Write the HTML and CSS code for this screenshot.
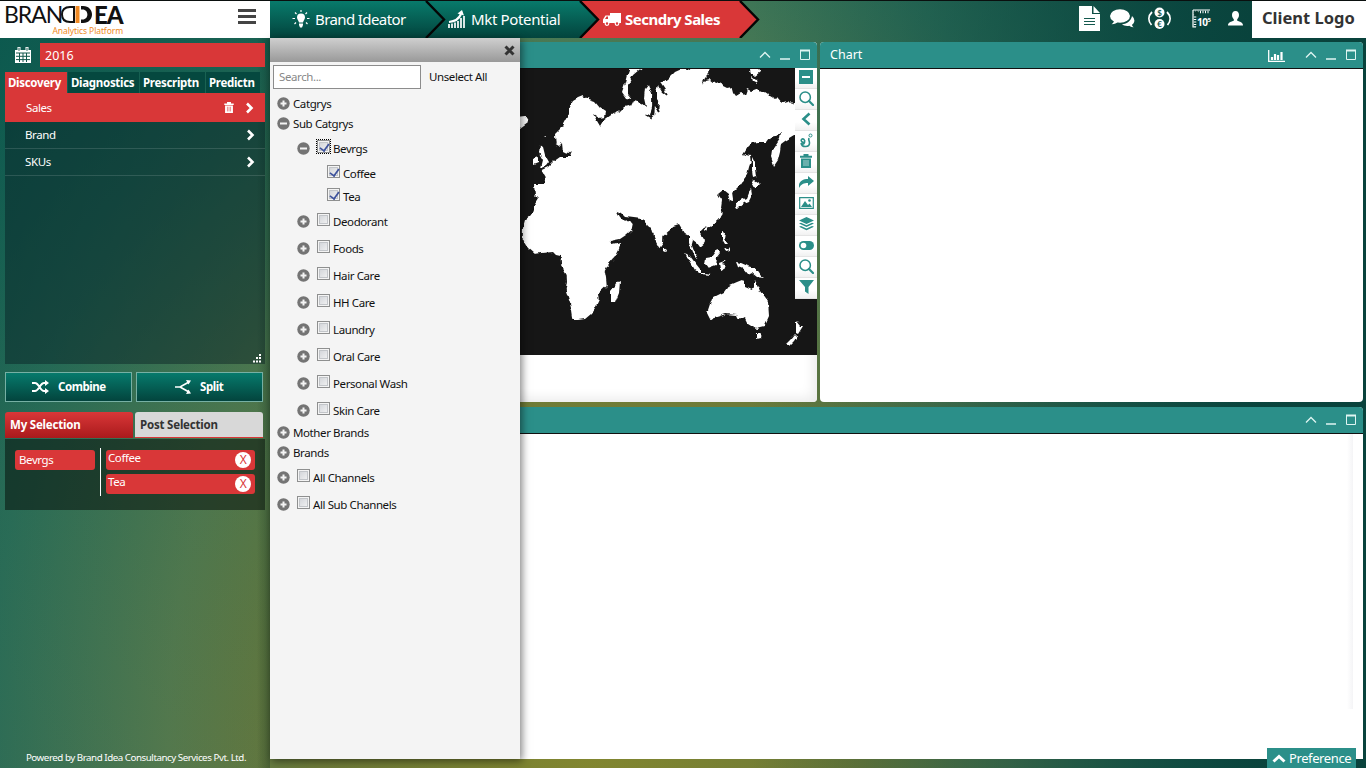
FILE: index.html
```html
<!DOCTYPE html>
<html lang="en">
<head>
<meta charset="utf-8">
<title>Brandidea Analytics Platform</title>
<link rel="stylesheet" href="styles.css">
</head>
<body>
<svg class="defs" width="0" height="0">
  <symbol id="plus" viewBox="0 0 13 13"><circle cx="6.500" cy="6.500" r="6.200" fill="#747474"/><path d="M3.500 6.500h6M6.500 3.500v6" stroke="#f4f4f4" stroke-width="2"/></symbol>
  <symbol id="minus" viewBox="0 0 13 13"><circle cx="6.500" cy="6.500" r="6.200" fill="#747474"/><path d="M3 6.500h7" stroke="#f4f4f4" stroke-width="2"/></symbol>
  <symbol id="chev" viewBox="0 0 8 12"><path d="M1.500 1.500L6 6l-4.500 4.500" fill="none" stroke="#fff" stroke-width="2.600"/></symbol>
  <symbol id="trash" viewBox="0 0 12 14"><path fill="currentColor" d="M0 1.800h3.500V0h5v1.800H12v2H0zM1 4.500h10V14H1z"/><path d="M4 6v6M6 6v6M8 6v6" stroke="#fff" stroke-opacity=".6"/></symbol>
  <symbol id="trash-red" viewBox="0 0 12 14"><path fill="#fff" d="M0 1.800h3.500V0h5v1.800H12v2H0zM1 4.500h10V14H1z"/><path d="M4 6v6M6 6v6M8 6v6" stroke="#d93738" stroke-opacity=".7"/></symbol>
  <symbol id="lens" viewBox="0 0 15 15"><circle cx="6.200" cy="6.200" r="5.200" fill="none" stroke="currentColor" stroke-width="1.500"/><path d="M10 10l4 4" stroke="currentColor" stroke-width="2.200" stroke-linecap="round"/></symbol>
  <symbol id="winctl" viewBox="0 0 52 12"><path d="M1 8.500l5-5 5 5M21 10h10" fill="none" stroke="#dff5f2" stroke-width="1.300"/><path d="M41.500 1.500h9v9h-9z" fill="none" stroke="#dff5f2"/><path d="M41 1.500h10" stroke="#dff5f2" stroke-width="2"/></symbol>
</svg>
<div class="app">
  <header class="top">
    <div class="brand">
      <div class="logo">
        <div class="word"><span class="thin">BRAN</span><svg width="32" height="17" viewBox="0 0 32 17"><path d="M13 1H9C3 1 1 4.500 1 8.500S3 16 9 16h4z" fill="none" stroke="#111" stroke-width="2"/><path d="M14.500 0h4v17h-4z" fill="#f08a24"/><path d="M20 0h2c12 0 12 17 0 17h-2v-3.500h1.500c6.500 0 6.500-10 0-10H20z" fill="#111"/></svg><span class="fat">EA</span></div>
        <div class="tag">Analytics Platform</div>
      </div>
      <span class="burger"></span>
    </div>
    <nav class="crumbs">
      <svg class="arrows" width="500" height="37" viewBox="0 0 500 37">
        <defs><linearGradient id="gt" x2="0" y2="1"><stop stop-color="#087a6b"/><stop offset="1" stop-color="#03443d"/></linearGradient></defs>
        <path d="M300 0h170l18 18.500-18 18.500H300z" fill="#d93738"/>
        <path d="M150 0h160l18 18.500-18 18.500H150z" fill="url(#gt)"/>
        <path d="M0 0h156l18 18.500-18 18.500H0z" fill="url(#gt)"/>
        <path d="M156 0l18 18.500-18 18.500M310 0l18 18.500-18 18.500M470 0l18 18.500-18 18.500" fill="none" stroke="#050505" stroke-width="2.400"/>
      </svg>
      <div class="crumb c1"><svg width="18" height="18" viewBox="0 0 18 18"><path d="M9 3.500a4 4 0 0 1 4 4c0 2-1.700 3-2 5H7c-.3-2-2-3-2-5a4 4 0 0 1 4-4zM7 13.500h4V15l-1 2.500H8L7 15z" fill="#fff"/><path d="M9 0v2M3 2.500l1.500 1.500M15 2.500L13.500 4M.5 8.500h2.500M15 8.500h2.500M2.500 14L4 12.500M15.500 14L14 12.500" stroke="#fff" stroke-width="1.200"/></svg><span>Brand Ideator</span></div>
      <div class="crumb c2"><svg width="17" height="19" viewBox="0 0 17 19"><path d="M1 18v-4M4 18v-4.500M7 18v-5.500M10 18v-7M13 18V8M16 18V6" stroke="#fff" stroke-width="1.700"/><path d="M1 12c6-.5 10-3 12-8" fill="none" stroke="#fff" stroke-width="2.200"/><path d="M9.500 3.500L14 0l2 5.500z" fill="#fff"/></svg><span>Mkt Potential</span></div>
      <div class="crumb c3"><svg width="18" height="13" viewBox="0 0 18 13"><path d="M7 0h11v10H0V6.500L2.500 2.500H7z" fill="#fff"/><path d="M2 6l1.500-2.500H5V6z" fill="#d93738"/><circle cx="4" cy="10.500" r="1.800" fill="#d93738" stroke="#fff" stroke-width="1.200"/><circle cx="14" cy="10.500" r="1.800" fill="#d93738" stroke="#fff" stroke-width="1.200"/></svg><span class="bold">Secndry Sales</span></div>
    </nav>
    <div class="tools">
      <svg width="21" height="25" viewBox="0 0 21 25"><path d="M0 0h13v8h8v17H0z" fill="#fff"/><path d="M14.500 0l6.500 7h-6.500z" fill="#fff"/><path d="M5 12.500h11M5 15.500h11M5 18.500h11" stroke="#14594e" stroke-width="1.200"/></svg>
      <svg class="chat" width="25" height="19" viewBox="0 0 25 19"><path d="M22 7a9 7 0 0 1 2.400 4.500c0 2-1 3.200-2.400 4.200.2 1.200.8 1.900 1.600 2.500-2 .1-3.300-.5-4.300-1.400-3 .6-5.700-.2-7.300-1.500C17.500 15 21 11.500 22 7z" fill="#fff"/><ellipse cx="10" cy="7" rx="10" ry="6.800" fill="#fff"/><path d="M4 10c0 3-.5 4-2.500 5.300 3.500 0 5-1 6.500-2.500z" fill="#fff"/></svg>
      <svg width="23" height="23" viewBox="0 0 23 23"><circle cx="11.500" cy="5.500" r="5" fill="#fff"/><circle cx="11.500" cy="17" r="5" fill="#fff"/><path d="M4 5C0 9 0 14 3.500 18M19 5c4 4 4 9 .5 13" fill="none" stroke="#fff" stroke-width="1.800"/><text x="11.500" y="8.700" class="cur">$</text><text x="11.500" y="20.200" class="cur">€</text></svg>
      <svg class="ruler" width="20" height="20" viewBox="0 0 20 20"><path d="M1 1h17M1 1v17h3" fill="none" stroke="#fff" stroke-width="1.200"/><path d="M3 3h15" stroke="#fff" stroke-width="2.500" stroke-dasharray="1 1.500"/><path d="M3 5v13" stroke="#fff" stroke-width="2.500" stroke-dasharray="1 1.500"/><circle cx="4.500" cy="4.500" r="2.600" fill="#09382f"/><text x="5" y="16.500" class="ten">10</text><text x="15.500" y="12.500" class="five">5</text></svg>
      <svg width="15" height="15" viewBox="0 0 15 15"><path d="M7.500 0c2.500 0 3.500 1.700 3.500 4 0 2-1 3.500-1.800 4.300v1.500c2.500 1 5.800 1.200 5.800 4.700H0c0-3.500 3.300-3.700 5.800-4.700V8.300C5 7.500 4 6 4 4c0-2.300 1-4 3.500-4z" fill="#fff"/></svg>
    </div>
    <div class="client"><span>Client Logo</span></div>
  </header>
  <div class="body">
    <aside class="side">
      <div class="year"><svg width="16" height="16" viewBox="0 0 16 16"><path d="M0 3h16v13H0z" fill="#fff"/><path d="M4 0v4M12 0v4" stroke="#fff" stroke-width="3"/><path d="M4 .8v3M12 .8v3" stroke="#14594e"/><path d="M1 6h14M1 9.300h14M1 12.600h14M4.500 6v9M8 6v9M11.500 6v9" stroke="#14594e"/></svg><div class="yearbox"><span>2016</span></div></div>
      <div class="tabs"><div class="tab on"><span>Discovery</span></div><div class="tab t2"><span>Diagnostics</span></div><div class="tab t3"><span>Prescriptn</span></div><div class="tab t4"><span>Predictn</span></div></div>
      <div class="list">
        <div class="item sel"><span>Sales</span><svg width="10" height="11" class="tr"><use href="#trash-red"/></svg><svg width="9" height="12"><use href="#chev"/></svg></div>
        <div class="item"><span>Brand</span><svg width="9" height="12"><use href="#chev"/></svg></div>
        <div class="item"><span>SKUs</span><svg width="9" height="12"><use href="#chev"/></svg></div>
        <svg class="grip" width="9" height="9" viewBox="0 0 9 9"><path d="M6 1h2M3 4h2M6 4h2M0 7.500h2M3 7.500h2M6 7.500h2" stroke="#fff" stroke-width="1.800"/></svg>
      </div>
      <div class="btns">
        <div class="btn"><svg width="17" height="14" viewBox="0 0 17 14"><path d="M0 3h3c4 0 5 8 9 8h2M0 11h3c4 0 5-8 9-8h2" fill="none" stroke="#fff" stroke-width="2"/><path d="M13 0l4 3-4 3zM13 8l4 3-4 3z" fill="#fff"/></svg><span>Combine</span></div>
        <div class="btn split"><svg width="16" height="14" viewBox="0 0 16 14"><path d="M0 7h5l9-5M5 7l9 5" fill="none" stroke="#fff" stroke-width="1.700"/><path d="M11 0l5 .5-2.500 4zM11 14l5-.5-2.500-4z" fill="#fff"/></svg><span>Split</span></div>
      </div>
      <div class="seltabs"><div class="st my"><span>My Selection</span></div><div class="st post"><span>Post Selection</span></div></div>
      <div class="selbox">
        <div class="chip key"><span>Bevrgs</span></div>
        <div class="chips"><div class="chip"><span>Coffee</span><b>X</b></div><div class="chip"><span>Tea</span><b>X</b></div></div>
      </div>
      <div class="powered"><span>Powered by Brand Idea Consultancy Services Pvt. Ltd.</span></div>
    </aside>
    <main class="main">
      <div class="row1">
        <section class="card mapcard">
          <div class="bar"><svg width="52" height="12"><use href="#winctl"/></svg></div>
          <div class="map">
            <svg class="world" width="544" height="286" viewBox="273 69 544 286"><defs><filter id="coast" x="0" y="0" width="1" height="1" filterUnits="objectBoundingBox"><feTurbulence type="fractalNoise" baseFrequency=".2" numOctaves="1" seed="4"/><feDisplacementMap in="SourceGraphic" scale="5" xChannelSelector="R" yChannelSelector="G"/></filter></defs>
            <g filter="url(#coast)"><path fill="#191919" d="M273 60h560v300H273z"/>
            <path fill="#fff" d="M523 227L522.700 240 527 247 535 254 541 253 553 252 556 255 560.700 256 561 265 566.700 275 567 281 565.700 290 570 303 572 311 573.300 320 578 320 585 319 591 314 595 308 598.700 300 598 294 606.700 286 606 278 604.700 271 608 265 615 257 619 249 621.300 242 612 244 610 241 620 239 626 235 631.700 230 632.700 225 628.300 220 624 221 620 217 616.700 210.700 621 213 625 217 630 217.500 643.300 219.300 648 226 651.700 226.700 655 240 659.300 248.300 663 243 663.300 236 670 230 673 226 679 224 682 229 685 234 689 235.700 689 243 692 251 696.700 259 698 257 694 251 691.700 245 693 240 697 243 700 247 704.700 243 705 240 702 235 699 231.700 703 227.700 710 227 718 220 722.700 213 721 207 722 200 718 194 723 190 728 194 730 202 733 200 732 193 740 185 744 179 747 175 749 167 750.700 162 750 155 746 154 742.300 156 748 147 752 143 758 142 767 142 770 138 775 137 781 132 780 138 772 150 771 157 774 166 778 160 780 152 781 144 785 141 790 138 800 132 800 101 792 105 788 101 782 102.700 777 97 775 99 770 96 768 93 765 91 760 92 757 88.700 751 91 747 89 745 94.700 741 93 736 96 733 92 731.700 87 727 88 723 86 720 82 715 83 710 79 706 80 702 84.700 705 78 709 74 710 64H691L690 70 684 68 675 72 668 79 661 84 665 90 667 95 662 92 658 85 656 92 656 98 659 103 658 112 655 106 654 117 650 115 653 106 653 96 650 90 648 84 645 88 644 98 646 107 641 103 634 101 632 105 624 107 619 112 613 113.700 607 118 603 121 600 126 597 121 593 114 599 118 605 117 606 111 600 107 595 101 589 99 583 96 578 98 573 101 569 108 567 117 561 128 555 134 555.700 144 559 146 562 143 563 152 567 154 571.700 150 570 157 560 157 553 162 548 167 541.700 170 545.700 177 544 184 534 184 535 195 539 199 533 209 531 215 525 220z"/>
            <path fill="#fff" d="M647 64L639 70 633 75 628 85 628 94 632 99 626 98 622 92 625 83 627 75 631 64zM540 145l3 2 2 8 4 7-3 4-5 2 2-8-4-7zM533 158l5-2v7l-5 2zM516 118l9-1 3 5-8 6zM544 138l3-2v2zM749 64h10l1 8-5 4-4-2zM752 77l4 3 1 4-4-2zM752 157l3 6 0 6 1 8-3 1-1-9zM754 180l6 4-4 4-4-2zM751 189l1 6-3 6-5 2-6 5-3-1 4-6 7-3 2-5zM722 232l3 1-1 6 4 5-3 0-3-5zM724 247l4 3 2-3 0 4-4 1zM706 258l6-1 6-8 2 4-3 4-1 8-8 3-3-4zM685 253l5 3 6 8 4 5v4l-5-3zM700 272l11 2v1l-11-1zM719 263l8-3-5 4 3 1-2 5-3-1zM736 262l5 1 7 3 8 2 5 7 4 3-8-1-5-4-4 2-5-6-5-2zM712 298l12-6 5-7 7-3 5-2 4 1 0 6 7 3 3-10 5 11 8 11 1 14-5 11-8 2-8-5-4-8-6 3-2-4-10-1-16 5-3-6zM757 333h5l-1 5-4 1zM796 321l4 5 3 0-5 8-2-1zM795 334l2 2-3 5-5 5-3-2 5-5zM618 282l2-1-1 12-4 10-4 0 0-12zM663 247l3 2-1 3-2-1zM704 229l3-2 1 3-3 2zM620 110l-4 4-3-1z"/>
            <path fill="none" stroke="#191919" stroke-width="1.800" d="M553 148l9 3M653 83v24l-2 10-5-3M659 86l8 9M655 105l4 7M720 196l4 2M774 141l-3 8"/></g></svg>
            <div class="mtools">
              <i><svg width="14" height="14"><path d="M0 0h14v14H0z" fill="#2b8f89"/><path d="M3 7h8" stroke="#fff" stroke-width="2"/></svg></i>
              <i><svg width="15" height="15"><use href="#lens"/></svg></i>
              <i><svg width="10" height="14"><path d="M8.500 1.500L2.500 7l6 5.500" fill="none" stroke="#2b8f89" stroke-width="2.600"/></svg></i>
              <i><svg width="14" height="15" viewBox="0 0 14 15"><path d="M5.500 9.500C3 9.500 1.500 8 2.500 6.500 4 5 6.500 6.500 5.500 9.500c-.5 2-2.500 2-3.500 1M2 10c1 5 8.500 4.500 8.500 0 0-2.500-1.500-3-.5-5" fill="none" stroke="#2b8f89" stroke-width="1.600"/><circle cx="11.500" cy="2.500" r="1.500" fill="none" stroke="#2b8f89"/></svg></i>
              <i><svg width="12" height="14"><use href="#trash"/></svg></i>
              <i><svg width="15" height="13"><path d="M0 12C-1 6 3 3 9 3V0l6 5-6 5V7C5 7 2 8 0 12z" fill="#2b8f89"/></svg></i>
              <i><svg width="15" height="12"><path d="M.7.700h13.600v10.600H.7z" fill="#fff" stroke="#2b8f89" stroke-width="1.200"/><path d="M2 10l4-6 3 4 1.500-1.500L13 10z" fill="#2b8f89"/><circle cx="10.500" cy="3.500" r="1.300" fill="#2b8f89"/></svg></i>
              <i><svg width="15" height="14"><path d="M7.500 0L15 3.500 7.500 7 0 3.500zM0 6.500l2-.8 5.500 2.600L13 5.700l2 .8L7.500 10zM0 9.700l2-.8 5.500 2.600L13 8.900l2 .8-7.500 3.600z" fill="#2b8f89"/></svg></i>
              <i><svg width="15" height="9"><rect width="15" height="9" rx="4.500" fill="#2b8f89"/><circle cx="4.500" cy="4.500" r="2.800" fill="#fff"/></svg></i>
              <i><svg width="15" height="15"><use href="#lens"/></svg></i>
              <i><svg width="15" height="14"><path d="M0 0h15L9.500 7v7L6 11.500V7z" fill="#2b8f89"/></svg></i>
            </div>
          </div>
        </section>
        <section class="card chart">
          <div class="bar"><span class="title">Chart</span><svg class="bars" width="17" height="12" viewBox="0 0 17 12"><path d="M.7 0v11.300H17" fill="none" stroke="#fff" stroke-width="1.300"/><path d="M4 10V7M7 10V4M10 10V5M13.500 10V2" stroke="#fff" stroke-width="2.200"/></svg><svg width="52" height="12"><use href="#winctl"/></svg></div>
        </section>
      </div>
      <section class="card grid">
        <div class="bar"><svg width="52" height="12"><use href="#winctl"/></svg></div>
        <div class="scroll"></div>
      </section>
    </main>
  </div>
  <div class="panel">
    <div class="phead"><svg width="11" height="11" viewBox="0 0 11 11"><path d="M1.500 1.500l8 8M9.500 1.500l-8 8" stroke="#333" stroke-width="3"/></svg></div>
    <div class="search"><div class="input"><span>Search...</span></div><span class="unsel">Unselect All</span></div>
    <div class="tree">
      <div class="n r20"><svg width="13" height="13"><use href="#plus"/></svg><span>Catgrys</span></div>
      <div class="n r20"><svg width="13" height="13"><use href="#minus"/></svg><span>Sub Catgrys</span></div>
      <div class="n r30 l1"><svg width="13" height="13"><use href="#minus"/></svg><em class="on foc"></em><span>Bevrgs</span></div>
      <div class="n l2 r20b"><em class="on"></em><span>Coffee</span></div>
      <div class="n l2 r25"><em class="on"></em><span>Tea</span></div>
      <div class="n l1"><svg width="13" height="13"><use href="#plus"/></svg><em></em><span>Deodorant</span></div>
      <div class="n l1"><svg width="13" height="13"><use href="#plus"/></svg><em></em><span>Foods</span></div>
      <div class="n l1"><svg width="13" height="13"><use href="#plus"/></svg><em></em><span>Hair Care</span></div>
      <div class="n l1"><svg width="13" height="13"><use href="#plus"/></svg><em></em><span>HH Care</span></div>
      <div class="n l1"><svg width="13" height="13"><use href="#plus"/></svg><em></em><span>Laundry</span></div>
      <div class="n l1"><svg width="13" height="13"><use href="#plus"/></svg><em></em><span>Oral Care</span></div>
      <div class="n l1"><svg width="13" height="13"><use href="#plus"/></svg><em></em><span>Personal Wash</span></div>
      <div class="n l1"><svg width="13" height="13"><use href="#plus"/></svg><em></em><span>Skin Care</span></div>
      <div class="n r18"><svg width="13" height="13"><use href="#plus"/></svg><span>Mother Brands</span></div>
      <div class="n r20"><svg width="13" height="13"><use href="#plus"/></svg><span>Brands</span></div>
      <div class="n l0"><svg width="13" height="13"><use href="#plus"/></svg><em></em><span>All Channels</span></div>
      <div class="n"><svg width="13" height="13"><use href="#plus"/></svg><em></em><span>All Sub Channels</span></div>
    </div>
  </div>
  <div class="pref"><svg width="14" height="9" viewBox="0 0 14 9"><path d="M1.500 7.500L7 2.500l5.500 5" fill="none" stroke="#fff" stroke-width="3"/></svg><span>Preference</span></div>
</div>
</body>
</html>
```
FILE: styles.css
```css
* { box-sizing: border-box; }
body { margin: 0; font: 11.5px/16px "Noto Sans", "Open Sans", sans-serif; letter-spacing: -.4px; color: #111; }
svg { display: block; flex: none; }
span { white-space: nowrap; }
.defs { position: absolute; }
.app { position: relative; width: 1366px; height: 768px; overflow: hidden; display: flex; flex-direction: column; border-top: 1px solid #0a0f0e; background: linear-gradient(90deg, rgba(8,64,58,0) 55%, rgba(8,64,58,.9) 92%), radial-gradient(ellipse 680px 1000px at 590px 740px, #82862f 0%, #6d7a38 40%, #577d50 62%, #2d705a 88%, #125b50 115%); }
.top { display: flex; height: 37px; flex: none; }
.brand { width: 270px; background: #fff; display: flex; justify-content: space-between; padding: 4px 14px 0 4px; }
.logo { width: 119px; }
.word { display: flex; align-items: center; height: 19px; color: #111; }
.word svg { margin: 0 1px 0 0; }
.thin { font: 23px/19px Lato, sans-serif; letter-spacing: -1px; width: 57px; }
.fat { font: 900 24px/19px Lato, sans-serif; letter-spacing: -1px; }
.tag { color: #f08a24; font-size: 8.5px; line-height: 12px; text-align: right; letter-spacing: -.1px; margin-top: 1px; }
.burger { width: 18px; height: 15px; margin-top: 4px; border-top: 3px solid #444; border-bottom: 3px solid #444; background: linear-gradient(#444, #444) 0 3px / 18px 3px no-repeat; }
.crumbs { width: 500px; position: relative; }
.arrows { position: absolute; left: 0; top: 0; }
.crumb { position: absolute; top: 0; height: 37px; display: flex; align-items: center; gap: 5px; padding-bottom: 1px; color: #fff; font-size: 15px; letter-spacing: -.35px; }
.c1 { left: 22px; letter-spacing: -.6px; } .c2 { left: 178px; gap: 6px; } .c3 { left: 333px; gap: 4px; }
.bold { font-weight: 700; letter-spacing: -.5px; }
.tools { flex: 1; display: flex; justify-content: flex-end; align-items: center; gap: 10px; padding: 0 9px 2px 0; }
.tools .chat { margin-right: 3px; }
.tools .ruler { margin: 0 6px 0 11px; }
.cur { font: 700 8px Lato, sans-serif; text-anchor: middle; fill: #14594e; letter-spacing: 0; }
.ten { font: 700 10px "Open Sans", sans-serif; fill: #fff; }
.five { font: 700 6px "Open Sans", sans-serif; fill: #fff; }
.client { width: 114px; background: #fff; color: #333; font-size: 16.5px; font-weight: 700; letter-spacing: 0; display: flex; align-items: center; padding: 0 0 3px 10px; }
.body { display: flex; flex: 1; min-height: 0; }
.side { width: 270px; padding: 5px 5px 2px; display: flex; flex-direction: column; color: #fff; background: linear-gradient(90deg, rgba(0,0,0,0) 95%, rgba(0,30,20,.25)), linear-gradient(160deg, rgba(10,88,78,.75), rgba(20,88,70,.2) 50%, rgba(60,80,50,.1)); }
.year { display: flex; align-items: center; padding-left: 10px; gap: 9px; height: 24px; }
.yearbox { flex: 1; height: 24px; background: #d93738; padding: 5px 5px; font-size: 12.5px; letter-spacing: 0; }
.tabs { display: flex; margin-top: 5px; height: 21px; gap: 1px; font-weight: 700; font-size: 11.5px; letter-spacing: -.3px; }
.tab { background: #05483f; line-height: 22px; padding-left: 3px; }
.tab.on { background: #d93738; width: 62px; }
.t2 { width: 71px; } .t3 { width: 65px; } .t4 { width: 54px; }
.list { height: 271px; background: rgba(4,25,30,.42); position: relative; }
.item { height: 27px; display: flex; align-items: center; padding: 0 10px 0 20px; border-bottom: 1px solid rgba(255,255,255,.13); }
.item span { flex: 1; }
.item.sel { background: #d93738; height: 29px; border: 0; padding-right: 11px; padding-left: 21px; }
.tr { margin-right: 11px; }
.grip { position: absolute; right: 3px; bottom: 1px; }
.btns { display: flex; gap: 4px; margin-top: 8px; }
.btn { width: 127px; height: 30px; border: 1px solid #76b0a4; background: linear-gradient(#067a6c, #03443d); display: flex; align-items: center; padding-left: 26px; gap: 9px; font-weight: 700; font-size: 11.5px; letter-spacing: -.45px; }
.split { padding-left: 38px; }
.seltabs { display: flex; gap: 2px; margin-top: 10px; height: 26px; font-weight: 700; letter-spacing: -.2px; }
.st { width: 128px; line-height: 26px; padding-left: 5px; border-radius: 3px 3px 0 0; }
.my { background: linear-gradient(#d93738, #a91a1c); }
.post { background: #d8d8d8; color: #333; border-bottom: 1px solid #d93738; }
.selbox { margin-top: 1px; height: 71px; background: rgba(8,18,12,.55); display: flex; padding: 9px 10px; }
.chip { height: 20px; background: #d93738; border-radius: 3px; display: flex; justify-content: space-between; padding: 0 4px 0 2px; line-height: 16px; }
.chip b { width: 16px; height: 16px; border-radius: 50%; background: #fff; color: #d93738; font-weight: 400; text-align: center; margin-top: 2px; font-size: 12px; }
.key { width: 80px; margin-top: 2px; line-height: 20px; padding-left: 4px; }
.chips { margin-left: 5px; border-left: 1px solid #fff; padding: 2px 0 0 5px; width: 155px; height: 48px; display: flex; flex-direction: column; gap: 4px; }
.powered { margin-top: auto; padding-left: 2px; text-align: center; font-size: 9.8px; letter-spacing: -.48px; }
.main { flex: 1; padding: 4px 3px 9px 3px; display: flex; flex-direction: column; gap: 5px; }
.row1 { display: flex; gap: 3px; height: 360px; }
.card { background: #fff; border-radius: 4px; display: flex; flex-direction: column; overflow: hidden; }
.mapcard { width: 544px; box-shadow: inset -4px -4px 12px #ececec; }
.chart { width: 543px; }
.grid { flex: 1; border-radius: 4px 4px 0 0; }
.bar { height: 27px; flex: none; background: #2b8f89; border-bottom: 1px solid #111; display: flex; align-items: center; justify-content: flex-end; padding: 0 6px 1px 10px; }
.title { flex: 1; color: #fff; font-size: 12.5px; letter-spacing: 0; }
.bars { margin: 2px 20px 0 0; }
.map { background: #191919; height: 286px; position: relative; }
.mtools { position: absolute; top: -1px; right: 0; width: 22px; height: 231px; background: #fff; color: #2b8f89; }
.mtools i { height: 21px; display: flex; align-items: center; justify-content: center; border-bottom: 1px solid #e4e4e4; background: linear-gradient(#fff 60%, #f1f1f1); padding-bottom: 2px; }
.scroll { align-self: flex-end; width: 11px; height: 275px; border-right: 5px solid #fff; background: linear-gradient(90deg, #fff, #f4f4f6); margin-right: 5px; }
.panel { position: absolute; left: 270px; top: 37px; width: 250px; height: 721px; background: #f4f4f4; box-shadow: 2px 2px 8px rgba(0,0,0,.5); }
.phead { height: 24px; background: linear-gradient(#cfcfcf, #999); display: flex; justify-content: flex-end; align-items: center; padding-right: 5px; }
.search { display: flex; align-items: center; padding: 3px 0 0 3px; }
.input { width: 148px; height: 24px; border: 1px solid #8c8c8c; background: #fff; color: #888; padding: 3px 5px; }
.unsel { margin-left: 8px; }
.tree { padding: 5px 0 0 7px; color: #111; }
.n { height: 27px; display: flex; align-items: center; }
.n > svg { margin-top: -1px; }
.n span { margin-left: 3px; }
.n em { width: 13px; height: 13px; border: 1px solid #8e8f8f; box-shadow: inset 0 0 0 1px #f4f4f4, inset 0 0 0 2px #c2c5c9; background: linear-gradient(135deg, #cdd0d5, #f6f6f6); margin: -4px 0 0 7px; position: relative; }
.n em.on::after { content: ""; position: absolute; left: 3px; top: 0; width: 5px; height: 9px; border: solid #3d529c; border-width: 0 2px 2px 0; transform: rotate(35deg) scale(.85); }
.n em.foc { outline: 1px dotted #000; }
.r20 { height: 20px; }
.r18 { height: 18px; margin-bottom: 1px; }
.l0 { margin-top: 1px; }
.r30 { height: 29px; }
.r20b { height: 21px; }
.r25 { height: 25px; margin-bottom: -1px; }
.l1 { padding-left: 20px; }
.l2 { padding-left: 43px; }
.pref { position: absolute; right: 10px; bottom: 0; width: 89px; height: 20px; background: #2b8f89; color: #fff; display: flex; align-items: center; gap: 3px; padding-left: 5px; font-size: 13px; letter-spacing: -.4px; }
```
